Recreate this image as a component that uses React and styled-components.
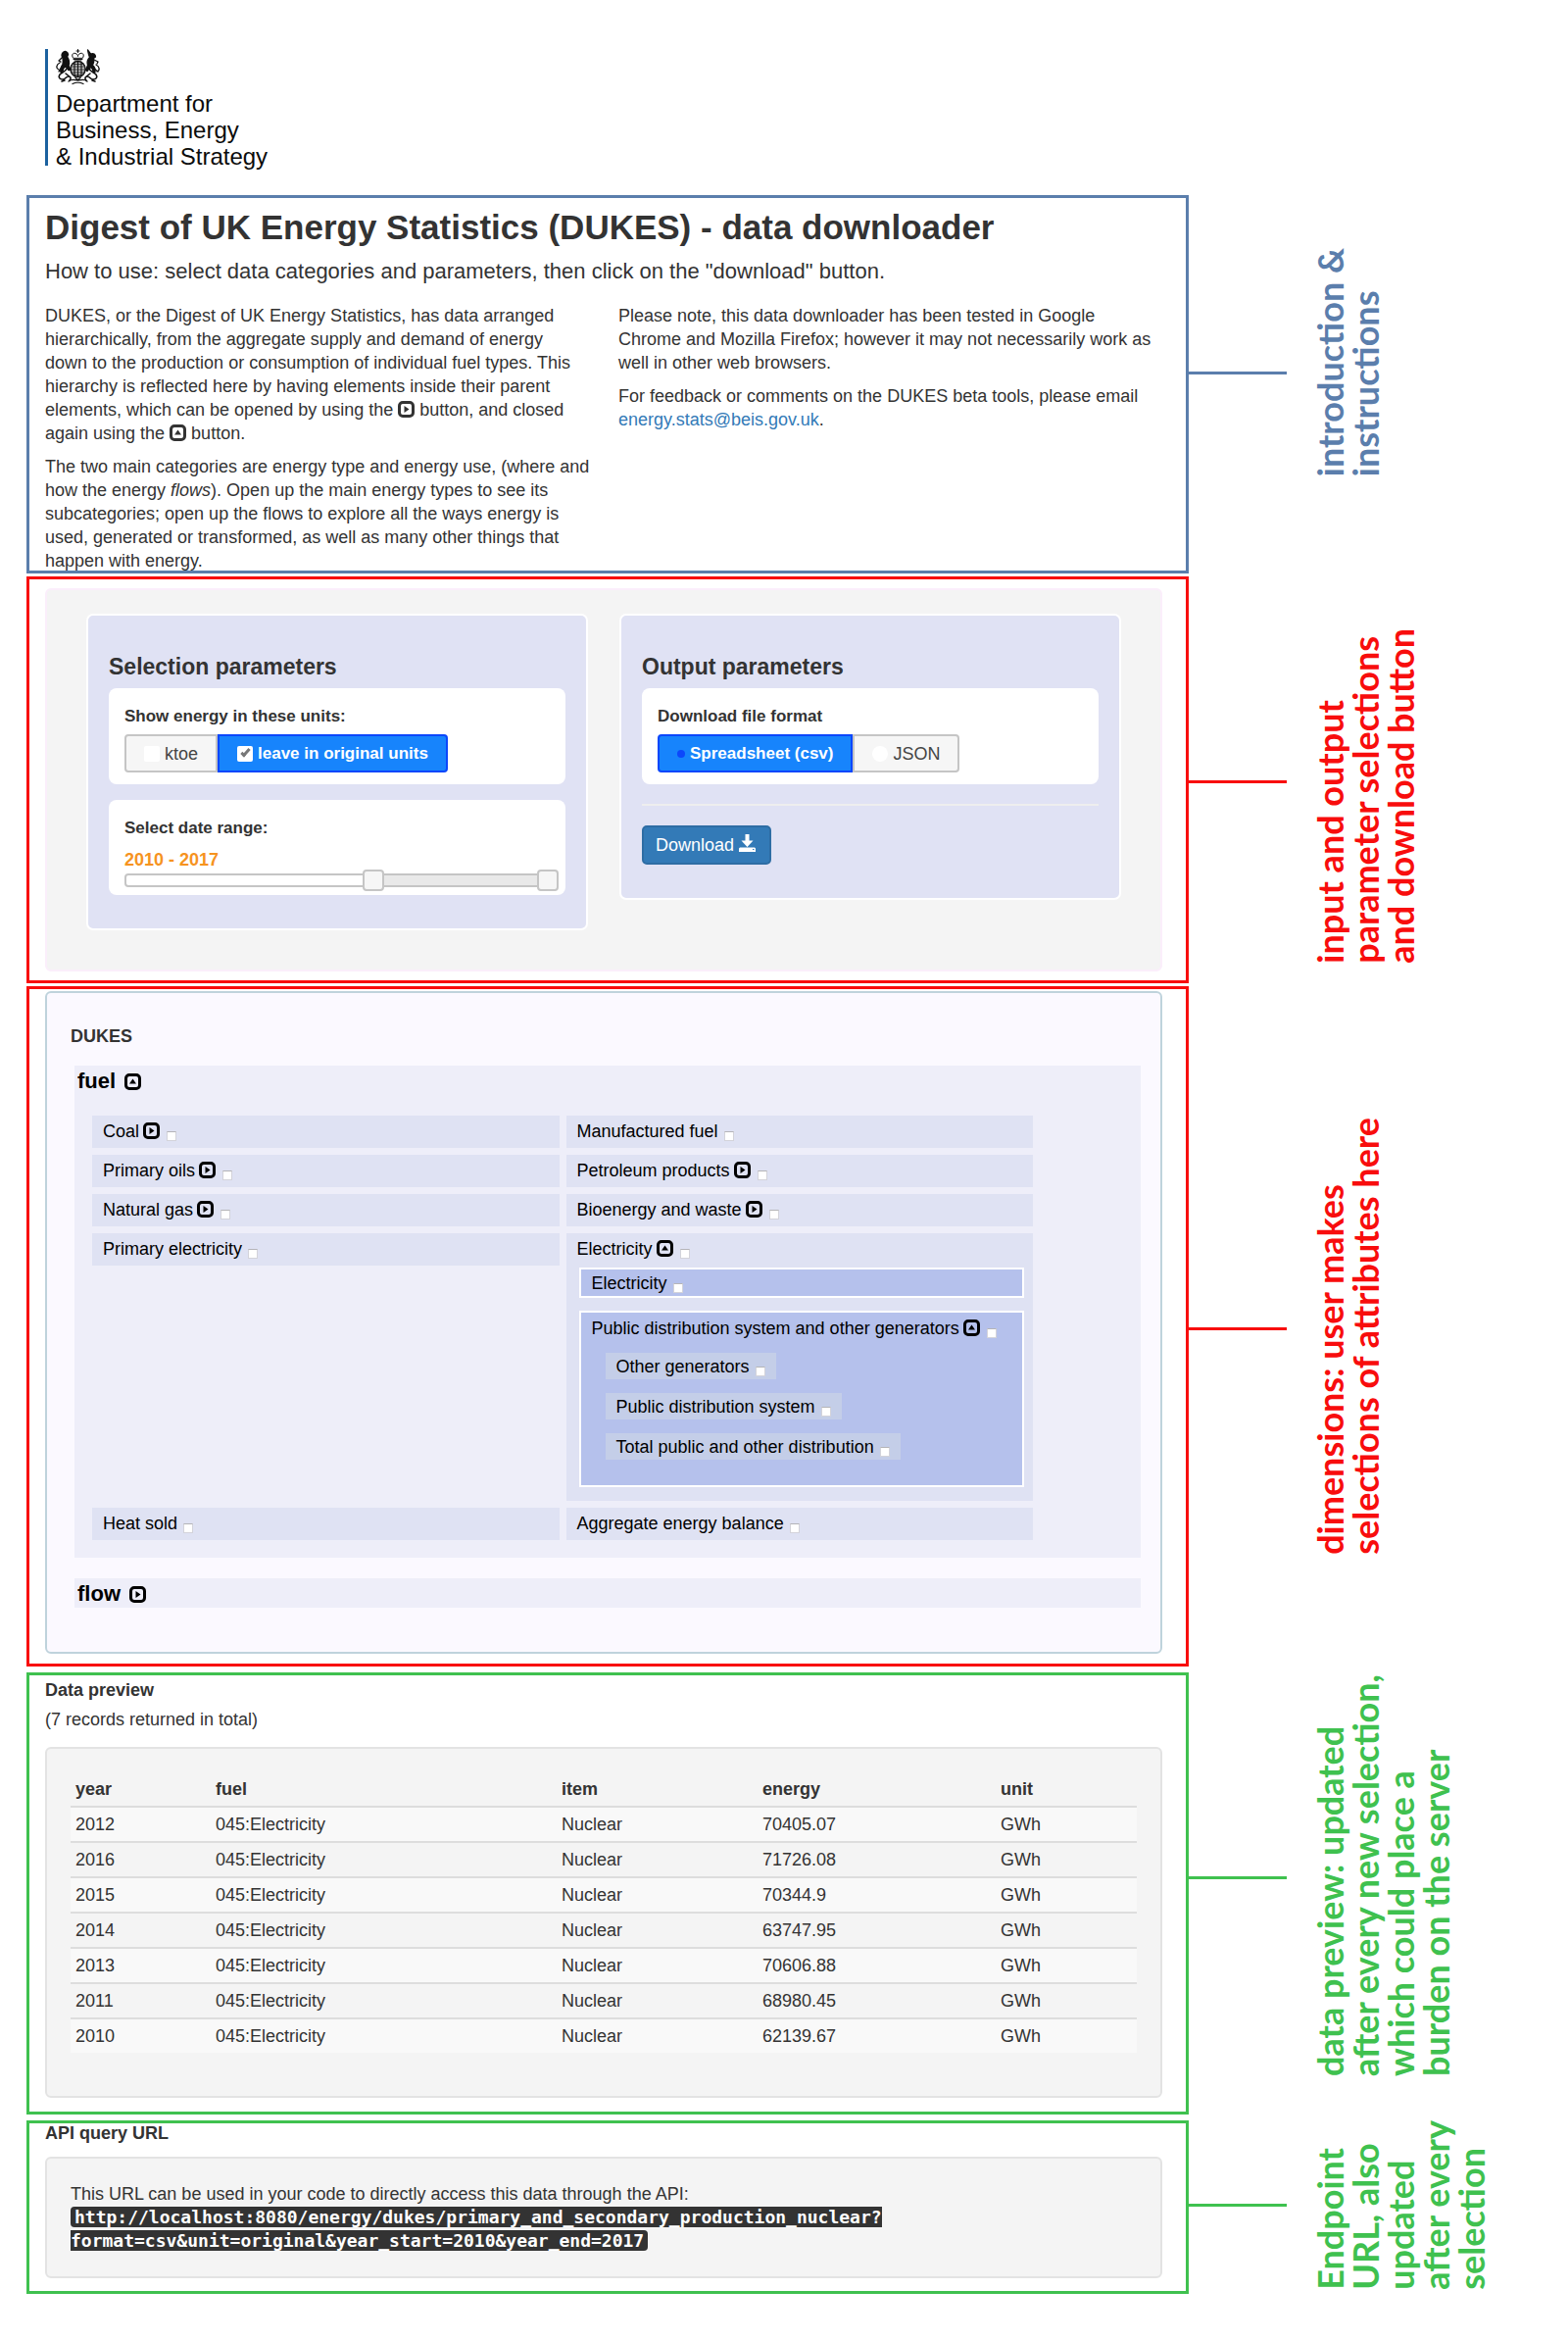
import React, { useState } from 'react';
import styled, { createGlobalStyle } from 'styled-components';

const BLUE = '#5b7eac';
const RED = '#f80d0d';
const GREEN = '#3fc14f';

const GlobalStyle = createGlobalStyle`
  *, *::before, *::after { box-sizing: border-box; }
  body {
    margin: 0;
    background: #fff;
    color: #333;
    font-family: "Liberation Sans", Arial, sans-serif;
    font-size: 18px;
    line-height: 24px;
  }
  h1, h2, h3, p, fieldset, legend { margin: 0; padding: 0; border: 0; font-size: inherit; }
  input, button { margin: 0; font: inherit; }
`;

const Page = styled.div`
  padding: 50px 0 49px 27px;
`;

/* ---------- masthead ---------- */

const Masthead = styled.header`
  display: flex;
  gap: 8px;
  padding: 0 0 26px 19px;
`;

const MastheadBar = styled.span`
  width: 3px;
  margin-bottom: 4px;
  background: #1c629f;
`;

const Department = styled.p`
  margin-top: 5px;
  color: #0b0c0c;
  font-size: 24px;
  line-height: 27px;
`;

const CrestSvg = styled.svg`
  display: block;
  width: 46px;
  height: 37px;
`;

function Crest() {
  return (
    <CrestSvg viewBox="0 0 46 37" aria-hidden="true" fill="none" stroke="#111" strokeLinecap="round" strokeLinejoin="round">
      <g strokeWidth="1">
        <path d="M22.5 0.5v3M21 2h3" />
        <path d="M17.5 9c-2-3 0-5.500 2.500-4.500c1.500.5 2.500 1.500 2.500 3c0-1.500 1-2.500 2.500-3c2.500-1 4.500 1.500 2.500 4.500z" />
        <path d="M18 10.500h9M19 12h7" />
      </g>
      <ellipse cx="22.500" cy="20.500" rx="7.500" ry="8" strokeWidth="1.500" fill="#bbb" />
      <path d="M17 15.500h11M15.500 18h14M15.500 21h14M16 24h13M18 26.500h9" strokeWidth="1" stroke="#444" />
      <path d="M19 14v13M22.500 13v15M26 14v13" strokeWidth="1.100" />
      <path fill="#111" strokeWidth="1.500" d="M7 4c2-2.500 5-1.500 5.500 1.500l-1 2.500c2 3 2.500 6 1.500 9l2 4l-2 .5l-3-4c-2 1-3 3-3 5l-2 1c-1-3 1-6 2-8c1-3 0-5 0-7c-1-1-1-3 0-4.500z" />
      <path fill="#111" strokeWidth="1.300" d="M32.500 1l3 4c3-1 5 0 5 3l-2 1.500c1 3 0 5-1 7c2 1.500 3 4 2.500 7l-2-.5c0-3-1.500-4-3-4.500l-3 4l-1.500-1l2-5c-1-3 0-6 2-8l-1-3z" />
      <path strokeWidth="1.300" d="M7 8l-4 4l2 1M4 14c-4 2-4 6-1 7M6 18l-3 5" />
      <path strokeWidth="1.300" d="M39 11l4 2l-1 2M41 16c4 2 4 6 1 7M39 20l4 3" />
      <path strokeWidth="1.600" d="M11 20c-1 3-5 4-7 6c-2 3 0 5 3 5c3 0 3-3 6-3c2 0 3 2 1 4M6 33l3-1M10 25l5 4" />
      <path strokeWidth="1.600" d="M34 20c1 3 5 4 7 6c2 3 0 5-3 5c-3 0-3-3-6-3c-2 0-3 2-1 4M40 33l-3-1M35 25l-5 4" />
      <path strokeWidth="1.300" d="M13 33c4-3 6-1 9.500-1s6-2 9.500 1M17 35.500c3-1.500 8-1.500 11 0M20 29.500l2.500 2l2.500-2" />
    </CrestSvg>
  );
}

/* ---------- annotated sections ---------- */

const Section = styled.section`
  display: grid;
  grid-template-columns: minmax(0, 1fr) 387px;
  margin-top: ${(p) => p.$gap || 0}px;
`;

const Frame = styled.div`
  padding: ${(p) => p.$top}px 27px ${(p) => p.$bottom}px 19px;
  outline: 3px solid ${(p) => p.$color};
  outline-offset: -3px;
`;

const Annotation = styled.aside`
  display: flex;
  gap: 26px;
  color: ${(p) => p.$color};
`;

const Connector = styled.span`
  flex: none;
  width: 100px;
  height: 3px;
  margin-top: ${(p) => p.$drop}px;
  background: currentColor;
`;

const Note = styled.p`
  align-self: flex-end;
  && { margin-bottom: ${(p) => p.$lift}px; }
  writing-mode: vertical-rl;
  transform: rotate(180deg);
  font-family: Lato, Carlito, sans-serif;
  font-size: 36px;
  font-weight: 700;
  line-height: 36px;
  white-space: nowrap;
`;

const NoteLine = styled.span`
  display: block;
`;

function Annotated({ color, gap, top, bottom, drop, lift, lines, children }) {
  return (
    <Section $gap={gap}>
      <Frame $color={color} $top={top} $bottom={bottom}>{children}</Frame>
      <Annotation $color={color}>
        <Connector $drop={drop} />
        <Note $lift={lift}>
          {lines.map((line) => <NoteLine key={line}>{line}</NoteLine>)}
        </Note>
      </Annotation>
    </Section>
  );
}

/* ---------- introduction ---------- */

const Title = styled.h1`
  && { font-size: 35px; }
  font-weight: 700;
  line-height: 40px;
`;

const Lead = styled.p`
  && { margin: 10px 0 18px; }
  font-size: 22px;
  line-height: 30px;
`;

const IntroColumns = styled.div`
  display: grid;
  grid-template-columns: 565fr 555fr;
  gap: 20px;
`;

const Prose = styled.div`
  display: flex;
  flex-direction: column;
  gap: 10px;
`;

const MailLink = styled.a`
  color: #337ab7;
  text-decoration: none;
`;

const ToggleSvg = styled.svg`
  flex: none;
  width: 17px;
  height: 17px;
  vertical-align: -2px;
`;

function ToggleIcon({ open }) {
  return (
    <ToggleSvg viewBox="0 0 17 17" aria-hidden="true">
      <rect x="1.500" y="1.500" width="14" height="14" rx="3.500" fill="none" stroke="currentColor" strokeWidth="3" />
      <path d={open ? 'M5 10.500L8.500 5.500L12 10.500z' : 'M6.500 5L11.500 8.500L6.500 12z'} fill="currentColor" />
    </ToggleSvg>
  );
}

/* ---------- parameters ---------- */

const ParameterWell = styled.div`
  display: grid;
  grid-template-columns: 1fr 1fr;
  align-items: start;
  gap: 32px;
  padding: 24px 40px 40px;
  border: 2px solid #fbeefb;
  border-radius: 6px;
  background: #f4f4f4;
`;

const Panel = styled.div`
  padding: 38px 21px 34px;
  border: 2px solid #fff;
  border-radius: 7px;
  background: #e0e2f4;
`;

const PanelTitle = styled.h2`
  && { margin-bottom: 8px; font-size: 23px; }
  font-weight: 700;
  line-height: 28px;
`;

const Card = styled.fieldset`
  && { padding: 17px 18px ${(p) => p.$bottom || 12}px 16px; }
  min-width: 0;
  border-radius: 8px;
  background: #fff;
  & + & { margin-top: 16px; }
`;

const CardLabel = styled.legend`
  float: left;
  width: 100%;
  && { margin-bottom: 6px; font-size: 17px; }
  font-weight: 700;
`;

const Segments = styled.div`
  clear: both;
  display: flex;
`;

const Segment = styled.label`
  display: flex;
  align-items: center;
  gap: 5px;
  height: 39px;
  padding: 0 18px;
  border: 2px solid #c5c5c5;
  background: #f6f6f6;
  color: #454545;
  &:first-child { border-radius: 4px 0 0 4px; }
  &:last-child { border-radius: 0 4px 4px 0; }
  &:has(input:checked) {
    border-color: #0c47fb;
    background: #1784fc;
    color: #fff;
    font-size: 17px;
    font-weight: 700;
  }
`;

const SquareRadio = styled.input`
  appearance: none;
  width: 16px;
  height: 16px;
  border-radius: 2px;
  background: #fff;
  &:checked::after {
    content: "";
    display: block;
    width: 5px;
    height: 10px;
    margin: 1px 0 0 6px;
    border: solid #777;
    border-width: 0 3px 3px 0;
    transform: rotate(42deg);
  }
`;

const RoundRadio = styled.input`
  appearance: none;
  width: 16px;
  height: 16px;
  border-radius: 50%;
  background: #fff;
  &:checked {
    width: 8px;
    height: 8px;
    background: #0c47fb;
  }
`;

const RangeValue = styled.output`
  clear: both;
  display: block;
  color: #f6931f;
  font-weight: 700;
  line-height: 28px;
`;

const RangeTrack = styled.div`
  display: grid;
  grid-template-rows: 10px;
  height: 14px;
  border: 2px solid #c5c5c5;
  border-radius: 4px;
`;

const RangeInput = styled.input`
  grid-area: 1 / 1;
  align-self: center;
  appearance: none;
  width: calc(100% + 26px);
  height: 22px;
  && { margin: 0 -13px; }
  background: transparent;
  pointer-events: none;
  &::-webkit-slider-thumb {
    appearance: none;
    width: 22px;
    height: 22px;
    border: 2px solid #c5c5c5;
    border-radius: 4px;
    background: #f6f6f6;
    pointer-events: auto;
  }
`;

const Rule = styled.hr`
  height: 2px;
  margin: 20px 0;
  border: 0;
  background: #eee;
`;

const DownloadButton = styled.button`
  display: flex;
  align-items: center;
  gap: 5px;
  height: 40px;
  padding: 0 14px 0 12px;
  border: 2px solid #2e6da4;
  border-radius: 5px;
  background: #337ab7;
  color: #fff;
`;

const SaveSvg = styled.svg`
  width: 17px;
  height: 18px;
  margin-bottom: 4px;
`;

function SaveIcon() {
  return (
    <SaveSvg viewBox="0 0 17 18" fill="currentColor" aria-hidden="true">
      <path d="M6.500 0h4v6.500h4L8.500 13l-6-6.500h4z" />
      <path fillRule="evenodd" d="M1 13.500h15l1 1v3.500H0v-3.500zM14 15v1h1.500v-1z" />
    </SaveSvg>
  );
}

const FIRST_YEAR = 2000;
const LAST_YEAR = 2017;

function DateRange() {
  const [from, setFrom] = useState(2010);
  const [to, setTo] = useState(2017);
  const percent = (year) => ((year - FIRST_YEAR) / (LAST_YEAR - FIRST_YEAR)) * 100;
  const fill = `linear-gradient(90deg, #fff ${percent(from)}%, #e9e9e9 ${percent(from)}%, #e9e9e9 ${percent(to)}%, #fff ${percent(to)}%)`;
  return (
    <Card $bottom={8}>
      <CardLabel>Select date range:</CardLabel>
      <RangeValue>{from} - {to}</RangeValue>
      <RangeTrack style={{ background: fill }}>
        <RangeInput type="range" aria-label="First year" min={FIRST_YEAR} max={LAST_YEAR} value={from}
          onChange={(e) => setFrom(Math.min(Number(e.target.value), to))} />
        <RangeInput type="range" aria-label="Last year" min={FIRST_YEAR} max={LAST_YEAR} value={to}
          onChange={(e) => setTo(Math.max(Number(e.target.value), from))} />
      </RangeTrack>
    </Card>
  );
}

/* ---------- dimension tree ---------- */

const TreeWell = styled.div`
  padding: 32px 0 45px;
  border: 2px solid #bfd3dc;
  border-radius: 6px;
  background: #fbf9ff;
`;

const TreeTitle = styled.h2`
  && { margin: 0 24px 18px; }
  font-weight: 700;
`;

const Dimension = styled.div`
  margin: 0 20px 0 28px;
  padding-bottom: ${(p) => (p.$open ? 18 : 0)}px;
  background: #eeeef9;
  color: #000;
  & + & { margin-top: 21px; }
`;

const DimensionHead = styled.div`
  display: flex;
  align-items: center;
  gap: 9px;
  padding: 2px 0 0 3px;
`;

const DimensionName = styled.h3`
  && { font-size: 22px; }
  font-weight: 700;
  line-height: 28px;
`;

const ToggleButton = styled.button`
  display: flex;
  padding: 0;
  border: 0;
  background: none;
  color: #000;
`;

const Cells = styled.div`
  display: grid;
  grid-template-columns: 1fr 1fr;
  align-items: start;
  gap: 7px;
  margin: 21px 110px 0 18px;
`;

const Cell = styled.div`
  padding: 4px 0 ${(p) => (p.$open ? 14 : 5)}px;
  background: #dfe2f3;
`;

const Branch = styled.div`
  margin: ${(p) => p.$gap}px 9px 0 13px;
  padding: ${(p) => (p.$open ? '4px 0 26px' : '2px 0 1px')};
  border: 2px solid #fff;
  background: #b5c1ec;
`;

const Leaves = styled.div`
  display: flex;
  flex-direction: column;
  align-items: flex-start;
  gap: 14px;
  margin: 13px 0 0 25px;
`;

const Leaf = styled.div`
  padding: 2px 0 1px;
  background: #c4cee8;
`;

const Entry = styled.div`
  display: flex;
  gap: 6px;
  height: 24px;
  padding: 0 11px;
  ${ToggleButton} { align-self: center; margin: 0 1px 2px -2px; }
`;

const Tick = styled.input`
  appearance: none;
  align-self: flex-end;
  width: 10px;
  height: 10px;
  && { margin-bottom: 2px; }
  border: 1px solid #d3d3da;
  border-top-color: #b4b4b8;
  background: #fff;
  &:checked { background: #1784fc; }
`;

function Item({ name, toggle }) {
  const id = `item-${React.useId()}`;
  return (
    <Entry>
      <label htmlFor={id}>{name}</label>
      {toggle && (
        <ToggleButton type="button" aria-label={`Toggle ${name}`} aria-expanded={toggle === 'open'}>
          <ToggleIcon open={toggle === 'open'} />
        </ToggleButton>
      )}
      <Tick type="checkbox" id={id} />
    </Entry>
  );
}

/* ---------- data preview and query ---------- */

const Heading = styled.h2`
  && { margin-bottom: ${(p) => p.$gap}px; }
  font-weight: 700;
`;

const GreyWell = styled.div`
  padding: 24px 24px ${(p) => p.$bottom}px;
  border: 2px solid #e3e3e3;
  border-radius: 6px;
  background: #f4f4f4;
`;

const RecordCount = styled.p`
  && { margin-bottom: 16px; }
`;

const Table = styled.table`
  width: 100%;
  border-spacing: 0;
  table-layout: fixed;
  th, td { padding: 5px; text-align: left; }
  td { border-top: 2px solid #ddd; }
  tbody tr:nth-child(odd) { background: #f9f9f9; }
`;

const COLUMN_WEIGHTS = [143, 353, 205, 243, 144];
const TOTAL_WEIGHT = COLUMN_WEIGHTS.reduce((sum, weight) => sum + weight, 0);

const Column = styled.col`
  width: ${(p) => (p.$weight / TOTAL_WEIGHT) * 100}%;
`;

const QueryUrl = styled.code`
  padding: 0 4px;
  border-radius: 4px;
  background: #333;
  color: #fff;
  font-family: "DejaVu Sans Mono", monospace;
  font-size: 18px;
  font-weight: 700;
`;

const RECORDS = [
  [2012, '70405.07'],
  [2016, '71726.08'],
  [2015, '70344.9'],
  [2014, '63747.95'],
  [2013, '70606.88'],
  [2011, '68980.45'],
  [2010, '62139.67'],
];

export default function App() {
  return (
    <Page>
      <GlobalStyle />
      <Masthead>
        <MastheadBar />
        <div>
          <Crest />
          <Department>Department for<br />Business, Energy<br />&amp; Industrial Strategy</Department>
        </div>
      </Masthead>

      <Annotated color={BLUE} top={13} bottom={1} drop={180} lift={99} lines={['introduction &', 'instructions']}>
        <Title>Digest of UK Energy Statistics (DUKES) - data downloader</Title>
        <Lead>How to use: select data categories and parameters, then click on the "download" button.</Lead>
        <IntroColumns>
          <Prose>
            <p>
              DUKES, or the Digest of UK Energy Statistics, has data arranged hierarchically, from the
              aggregate supply and demand of energy down&nbsp;to the production or consumption of individual
              fuel types. This hierarchy is reflected here by having elements inside their parent
              elements, which can be opened by using the <ToggleIcon /> button, and closed again using
              the <ToggleIcon open /> button.
            </p>
            <p>
              The two main categories are energy type and energy use, (where and how the
              energy <em>flows</em>). Open up the main energy types to see its subcategories; open up the
              flows to explore all the ways energy is used, generated or transformed, as well as many
              other things that happen with energy.
            </p>
          </Prose>
          <Prose>
            <p>
              Please note, this data downloader has been tested in Google Chrome and Mozilla Firefox;
              however it may not necessarily work as well in other web browsers.
            </p>
            <p>
              For feedback or comments on the DUKES beta tools, please
              email <MailLink href="mailto:energy.stats@beis.gov.uk">energy.stats@beis.gov.uk</MailLink>.
            </p>
          </Prose>
        </IntroColumns>
      </Annotated>

      <Annotated color={RED} gap={3} top={12} bottom={12} drop={208} lift={20}
        lines={['input and output', 'parameter selections', 'and download button']}>
        <ParameterWell>
          <Panel>
            <PanelTitle>Selection parameters</PanelTitle>
            <Card>
              <CardLabel>Show energy in these units:</CardLabel>
              <Segments>
                <Segment><SquareRadio type="radio" name="unit" />ktoe</Segment>
                <Segment><SquareRadio type="radio" name="unit" defaultChecked />leave in original units</Segment>
              </Segments>
            </Card>
            <DateRange />
          </Panel>
          <Panel>
            <PanelTitle>Output parameters</PanelTitle>
            <Card>
              <CardLabel>Download file format</CardLabel>
              <Segments>
                <Segment><RoundRadio type="radio" name="format" defaultChecked />Spreadsheet (csv)</Segment>
                <Segment><RoundRadio type="radio" name="format" />JSON</Segment>
              </Segments>
            </Card>
            <Rule />
            <DownloadButton type="button">Download<SaveIcon /></DownloadButton>
          </Panel>
        </ParameterWell>
      </Annotated>

      <Annotated color={RED} gap={3} top={5} bottom={13} drop={348} lift={114}
        lines={['dimensions: user makes', 'selections of attributes here']}>
        <TreeWell>
          <TreeTitle>DUKES</TreeTitle>
          <Dimension $open>
            <DimensionHead>
              <DimensionName>fuel</DimensionName>
              <ToggleButton type="button" aria-label="Toggle fuel" aria-expanded="true"><ToggleIcon open /></ToggleButton>
            </DimensionHead>
            <Cells>
              <Cell><Item name="Coal" toggle="closed" /></Cell>
              <Cell><Item name="Manufactured fuel" /></Cell>
              <Cell><Item name="Primary oils" toggle="closed" /></Cell>
              <Cell><Item name="Petroleum products" toggle="closed" /></Cell>
              <Cell><Item name="Natural gas" toggle="closed" /></Cell>
              <Cell><Item name="Bioenergy and waste" toggle="closed" /></Cell>
              <Cell><Item name="Primary electricity" /></Cell>
              <Cell $open>
                <Item name="Electricity" toggle="open" />
                <Branch $gap={7}><Item name="Electricity" /></Branch>
                <Branch $gap={13} $open>
                  <Item name="Public distribution system and other generators" toggle="open" />
                  <Leaves>
                    <Leaf><Item name="Other generators" /></Leaf>
                    <Leaf><Item name="Public distribution system" /></Leaf>
                    <Leaf><Item name="Total public and other distribution" /></Leaf>
                  </Leaves>
                </Branch>
              </Cell>
              <Cell><Item name="Heat sold" /></Cell>
              <Cell><Item name="Aggregate energy balance" /></Cell>
            </Cells>
          </Dimension>
          <Dimension>
            <DimensionHead>
              <DimensionName>flow</DimensionName>
              <ToggleButton type="button" aria-label="Toggle flow" aria-expanded="false"><ToggleIcon /></ToggleButton>
            </DimensionHead>
          </Dimension>
        </TreeWell>
      </Annotated>

      <Annotated color={GREEN} gap={6} top={6} bottom={17} drop={208} lift={39}
        lines={['data preview: updated', 'after every new selection,', 'which could place a', 'burden on the server']}>
        <Heading $gap={6}>Data preview</Heading>
        <RecordCount>(7 records returned in total)</RecordCount>
        <GreyWell $bottom={44}>
          <Table>
            <colgroup>{COLUMN_WEIGHTS.map((weight) => <Column key={weight} $weight={weight} />)}</colgroup>
            <thead>
              <tr><th>year</th><th>fuel</th><th>item</th><th>energy</th><th>unit</th></tr>
            </thead>
            <tbody>
              {RECORDS.map(([year, energy]) => (
                <tr key={year}>
                  <td>{year}</td><td>045:Electricity</td><td>Nuclear</td><td>{energy}</td><td>GWh</td>
                </tr>
              ))}
            </tbody>
          </Table>
        </GreyWell>
      </Annotated>

      <Annotated color={GREEN} gap={6} top={1} bottom={13} drop={85} lift={4}
        lines={['Endpoint', 'URL, also', 'updated', 'after every', 'selection']}>
        <Heading $gap={12}>API query URL</Heading>
        <GreyWell $bottom={24}>
          <p>
            This URL can be used in your code to directly access this data through the API:<br />
            <QueryUrl>
              http://localhost:8080/energy/dukes/primary_and_secondary_production_nuclear?<wbr />format=csv&amp;unit=original&amp;year_start=2010&amp;year_end=2017
            </QueryUrl>
          </p>
        </GreyWell>
      </Annotated>
    </Page>
  );
}
